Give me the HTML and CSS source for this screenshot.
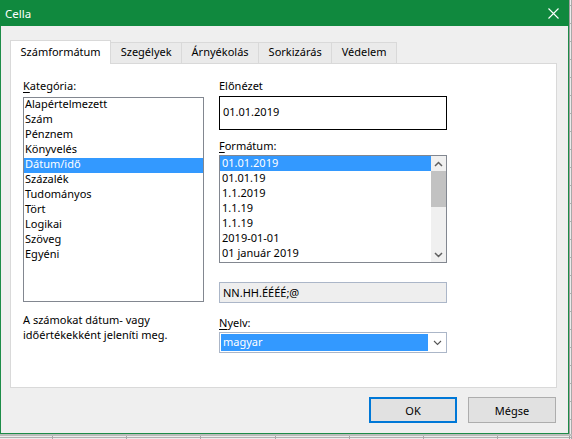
FILE: index.html
```html
<!DOCTYPE html>
<html lang="hu">
<head>
<meta charset="utf-8">
<title>Cella</title>
<link rel="stylesheet" href="styles.css">
</head>
<body>
<div class="dialog">
  <div class="titlebar">
    <span class="title">Cella</span>
    <svg class="close" width="11" height="11" viewBox="0 0 11 11"><path d="M0.5 0.5 L10.5 10.5 M10.5 0.5 L0.5 10.5" stroke="#fff" stroke-width="1.1" fill="none"/></svg>
  </div>
  <div class="content">
    <div class="tabs">
      <div class="tab active">Számformátum</div>
      <div class="tab">Szegélyek</div>
      <div class="tab">Árnyékolás</div>
      <div class="tab">Sorkizárás</div>
      <div class="tab">Védelem</div>
    </div>
    <div class="panel">
      <div class="col-left">
        <div class="label"><u>K</u>ategória:</div>
        <div class="listbox cat-list">
          <div class="item">Alapértelmezett</div>
          <div class="item">Szám</div>
          <div class="item">Pénznem</div>
          <div class="item">Könyvelés</div>
          <div class="item selected">Dátum/idő</div>
          <div class="item">Százalék</div>
          <div class="item">Tudományos</div>
          <div class="item">Tört</div>
          <div class="item">Logikai</div>
          <div class="item">Szöveg</div>
          <div class="item">Egyéni</div>
        </div>
        <div class="desc">A számokat dátum- vagy<br>időértékekként jeleníti meg.</div>
      </div>
      <div class="col-right">
        <div class="label">Előnézet</div>
        <div class="preview">01.01.2019</div>
        <div class="label label-fmt"><u>F</u>ormátum:</div>
        <div class="listbox fmt-list">
          <div class="fmt-items">
            <div class="fitem selected">01.01.2019</div>
            <div class="fitem">01.01.19</div>
            <div class="fitem">1.1.2019</div>
            <div class="fitem">1.1.19</div>
            <div class="fitem">1.1.19</div>
            <div class="fitem">2019-01-01</div>
            <div class="fitem">01 január 2019</div>
          </div>
          <div class="scrollbar">
            <div class="sb-btn"><svg width="9" height="6" viewBox="0 0 9 6"><path d="M1 5 L4.5 1.5 L8 5" stroke="#606060" stroke-width="1.5" fill="none"/></svg></div>
            <div class="sb-thumb"></div>
            <div class="sb-track"></div>
            <div class="sb-btn"><svg width="9" height="6" viewBox="0 0 9 6"><path d="M1 1 L4.5 4.5 L8 1" stroke="#606060" stroke-width="1.5" fill="none"/></svg></div>
          </div>
        </div>
        <div class="code">NN.HH.ÉÉÉÉ;@</div>
        <div class="label label-lang"><u>N</u>yelv:</div>
        <div class="combo">
          <div class="combo-val">magyar</div>
          <div class="combo-arrow"><svg width="9" height="6" viewBox="0 0 9 6"><path d="M1 1 L4.5 4.5 L8 1" stroke="#555" stroke-width="1.1" fill="none"/></svg></div>
        </div>
      </div>
    </div>
    <div class="buttons">
      <div class="btn default">OK</div>
      <div class="btn">Mégse</div>
    </div>
  </div>
</div>
</body>
</html>
```
FILE: styles.css
```css
* { box-sizing: border-box; }
html, body { margin: 0; padding: 0; }
body {
  width: 572px;
  height: 439px;
  overflow: hidden;
  font-family: "Noto Sans", "Open Sans", sans-serif;
  font-size: 11px;
  color: #000;
  background-color: #ececec;
  background-image:
    linear-gradient(#bcbcbc, #bcbcbc),
    linear-gradient(#a0a0a0, #a0a0a0),
    repeating-linear-gradient(90deg, transparent 0, transparent 52px, #a9a9a9 52px, #a9a9a9 53px, transparent 53px, transparent 74.2px),
    repeating-linear-gradient(180deg, transparent 0, transparent 5px, #b0b0b0 5px, #b0b0b0 6px, transparent 6px, transparent 18px);
  background-repeat: no-repeat, no-repeat, repeat, repeat;
  background-size: 100% 2px, 1px 100%, 100% 100%, 100% 100%;
  background-position: 0 434px, 569px 0, 0 0, 0 0;
}
.dialog {
  width: 569px;
  height: 434px;
  background: #efefef;
  border: 1px solid #1d8c48;
  border-top: 0;
  display: flex;
  flex-direction: column;
}
.titlebar {
  height: 26px;
  margin: 0 -1px;
  background: #10893e;
  color: #fff;
  display: flex;
  align-items: center;
  justify-content: space-between;
  padding: 0 10px 0 5px;
  flex: none;
}
.title { font-size: 11.5px; }
.close { display: block; margin-top: 1px; }
.content {
  padding: 14px 11px 10px 9px;
  display: flex;
  flex-direction: column;
}
.tabs {
  display: flex;
  align-items: flex-end;
  height: 23px;
  position: relative;
  z-index: 1;
}
.tab {
  height: 21px;
  padding: 0 9.5px;
  line-height: 18px;
  border: 1px solid #d9d9d9;
  border-bottom: 0;
  background: #eaeaea;
  margin-left: -1px;
  white-space: nowrap;
}
.tab:first-child { margin-left: 0; }
.tab.active {
  height: 24px;
  margin-bottom: -1px;
  background: #fff;
  padding-top: 1px;
  line-height: 20px;
}
.panel {
  width: 547px;
  height: 325px;
  background: #fff;
  border: 1px solid #d9d9d9;
  padding: 14px 12px 0 12px;
  display: flex;
  gap: 15px;
}
.col-left { width: 181px; display: flex; flex-direction: column; }
.col-right { width: 228px; display: flex; flex-direction: column; }
.label { height: 15px; line-height: 15px; white-space: nowrap; }
.label u { text-decoration-thickness: 1px; text-underline-offset: 2px; }
.listbox {
  border: 1px solid #828790;
  background: #fff;
}
.cat-list {
  margin-top: 4px;
  height: 205px;
}
.item {
  height: 15px;
  line-height: 12px;
  padding: 0 0 3px 1px;
  white-space: nowrap;
}
.selected { background: #3399ff; color: #fff; }
.desc {
  margin-top: 11px;
  line-height: 14.5px;
}
.preview {
  margin-top: 3px;
  height: 34px;
  border: 1px solid #000;
  padding: 0 0 2px 3px;
  line-height: 30px;
}
.label-fmt { margin-top: 8px; }
.fmt-list {
  margin-top: 2px;
  height: 108px;
  display: flex;
}
.fmt-items { flex: 1; }
.fitem {
  height: 15px;
  line-height: 13px;
  padding: 0 0 2px 2px;
  white-space: nowrap;
}
.scrollbar {
  width: 15px;
  background: #f0f0f0;
  display: flex;
  flex-direction: column;
}
.sb-btn {
  height: 15px;
  display: flex;
  align-items: center;
  justify-content: center;
}
.sb-thumb { height: 36px; background: #c2c2c2; }
.sb-track { flex: 1; }
.code {
  margin-top: 19px;
  height: 21px;
  border: 1px solid #abb6c8;
  background: #eeeeee;
  padding-left: 3px;
  line-height: 19px;
}
.label-lang { margin-top: 12px; }
.combo {
  margin-top: 2px;
  height: 21px;
  border: 1px solid #abb6c8;
  background: #fff;
  padding: 1px;
  display: flex;
}
.combo-val {
  width: 207px;
  height: 17px;
  background: #3399ff;
  color: #fff;
  line-height: 16px;
  padding: 0 0 1px 2px;
}
.combo-arrow {
  flex: 1;
  display: flex;
  align-items: center;
  justify-content: center;
  padding-left: 1px;
}
.buttons {
  margin-top: 9px;
  display: flex;
  justify-content: flex-end;
  gap: 11px;
  padding-right: 1px;
}
.btn {
  width: 88px;
  height: 26px;
  background: #e1e1e1;
  border: 1px solid #adadad;
  display: flex;
  align-items: center;
  justify-content: center;
}
.btn.default { border: 2px solid #0078d7; }
```
